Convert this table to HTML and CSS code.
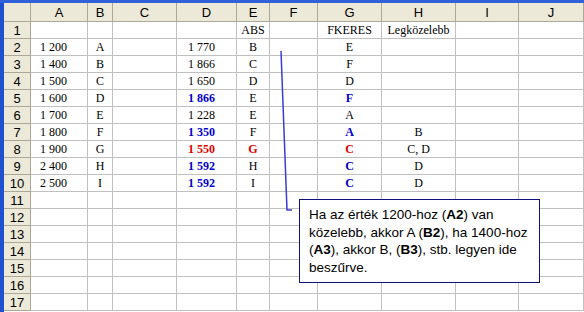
FILE: index.html
```html
<!DOCTYPE html>
<html>
<head>
<meta charset="utf-8">
<link rel="stylesheet" href="styles.css">
</head>
<body>
<div class="screen">
  <div class="topbar"></div>
  <div class="main">
    <div class="leftbar"></div>
    <div class="sheet">
      <div class="h corner"></div><div class="h">A</div><div class="h">B</div><div class="h">C</div><div class="h">D</div><div class="h">E</div><div class="h">F</div><div class="h">G</div><div class="h">H</div><div class="h">I</div><div class="h">J</div>

      <div class="h r">1</div><div class="c"></div><div class="c"></div><div class="c"></div><div class="c"></div><div class="c m">ABS</div><div class="c"></div><div class="c m">FKERES</div><div class="c m">Legközelebb</div><div class="c"></div><div class="c"></div>

      <div class="h r">2</div><div class="c a">1 200</div><div class="c m">A</div><div class="c"></div><div class="c d">1 770</div><div class="c m">B</div><div class="c"></div><div class="c m">E</div><div class="c"></div><div class="c"></div><div class="c"></div>

      <div class="h r">3</div><div class="c a">1 400</div><div class="c m">B</div><div class="c"></div><div class="c d">1 866</div><div class="c m">C</div><div class="c"></div><div class="c m">F</div><div class="c"></div><div class="c"></div><div class="c"></div>

      <div class="h r">4</div><div class="c a">1 500</div><div class="c m">C</div><div class="c"></div><div class="c d">1 650</div><div class="c m">D</div><div class="c"></div><div class="c m">D</div><div class="c"></div><div class="c"></div><div class="c"></div>

      <div class="h r">5</div><div class="c a">1 600</div><div class="c m">D</div><div class="c"></div><div class="c d blue">1 866</div><div class="c m">E</div><div class="c"></div><div class="c m blue">F</div><div class="c"></div><div class="c"></div><div class="c"></div>

      <div class="h r">6</div><div class="c a">1 700</div><div class="c m">E</div><div class="c"></div><div class="c d">1 228</div><div class="c m">E</div><div class="c"></div><div class="c m">A</div><div class="c"></div><div class="c"></div><div class="c"></div>

      <div class="h r">7</div><div class="c a">1 800</div><div class="c m">F</div><div class="c"></div><div class="c d blue">1 350</div><div class="c m">F</div><div class="c"></div><div class="c m blue">A</div><div class="c m">B</div><div class="c"></div><div class="c"></div>

      <div class="h r">8</div><div class="c a">1 900</div><div class="c m">G</div><div class="c"></div><div class="c d red">1 550</div><div class="c m red">G</div><div class="c"></div><div class="c m red">C</div><div class="c m">C, D</div><div class="c"></div><div class="c"></div>

      <div class="h r">9</div><div class="c a">2 400</div><div class="c m">H</div><div class="c"></div><div class="c d blue">1 592</div><div class="c m">H</div><div class="c"></div><div class="c m blue">C</div><div class="c m">D</div><div class="c"></div><div class="c"></div>

      <div class="h r">10</div><div class="c a">2 500</div><div class="c m">I</div><div class="c"></div><div class="c d blue">1 592</div><div class="c m">I</div><div class="c"></div><div class="c m blue">C</div><div class="c m">D</div><div class="c"></div><div class="c"></div>

      <div class="h r">11</div><div class="c"></div><div class="c"></div><div class="c"></div><div class="c"></div><div class="c"></div><div class="c"></div><div class="c"></div><div class="c"></div><div class="c"></div><div class="c"></div>
      <div class="h r">12</div><div class="c"></div><div class="c"></div><div class="c"></div><div class="c"></div><div class="c"></div><div class="c"></div><div class="c"></div><div class="c"></div><div class="c"></div><div class="c"></div>
      <div class="h r">13</div><div class="c"></div><div class="c"></div><div class="c"></div><div class="c"></div><div class="c"></div><div class="c"></div><div class="c"></div><div class="c"></div><div class="c"></div><div class="c"></div>
      <div class="h r">14</div><div class="c"></div><div class="c"></div><div class="c"></div><div class="c"></div><div class="c"></div><div class="c"></div><div class="c"></div><div class="c"></div><div class="c"></div><div class="c"></div>
      <div class="h r">15</div><div class="c"></div><div class="c"></div><div class="c"></div><div class="c"></div><div class="c"></div><div class="c"></div><div class="c"></div><div class="c"></div><div class="c"></div><div class="c"></div>
      <div class="h r">16</div><div class="c"></div><div class="c"></div><div class="c"></div><div class="c"></div><div class="c"></div><div class="c"></div><div class="c"></div><div class="c"></div><div class="c"></div><div class="c"></div>
      <div class="h r">17</div><div class="c"></div><div class="c"></div><div class="c"></div><div class="c"></div><div class="c"></div><div class="c"></div><div class="c"></div><div class="c"></div><div class="c"></div><div class="c"></div>
    </div>
  </div>

  <svg class="arrow" width="584" height="312" viewBox="0 0 584 312">
    <polyline points="281,51 287,210 292,210" fill="none" stroke="#3c3cd0" stroke-width="1.5"/>
  </svg>

  <div class="comment">Ha az érték 1200-hoz (<b>A2</b>) van közelebb, akkor A (<b>B2</b>), ha 1400-hoz (<b>A3</b>), akkor B, (<b>B3</b>), stb. legyen ide beszűrve.</div>
</div>
</body>
</html>
```

FILE: styles.css
```css
html, body {
  margin: 0;
  padding: 0;
  background: #ffffff;
}

.screen {
  position: relative;
  width: 584px;
  height: 312px;
  overflow: hidden;
  display: flex;
  flex-direction: column;
}

.topbar {
  height: 3px;
  background: #2f62d8;
  flex: none;
}

.main {
  display: flex;
  flex: 1;
  min-height: 0;
}

.leftbar {
  width: 4px;
  background: #1f50d0;
  flex: none;
}

.sheet {
  display: grid;
  grid-template-columns: 27px 57px 25px 64px 60px 33px 48px 64px 74px 63px 65px;
  grid-template-rows: 19px repeat(17, 17px);
  font-family: "Liberation Serif", "Times New Roman", serif;
  font-size: 12px;
  color: #000;
}

.h {
  box-sizing: border-box;
  background: #ece9d8;
  border-right: 1px solid #aca899;
  border-bottom: 1px solid #aca899;
  font-family: "Liberation Sans", Arial, sans-serif;
  font-size: 13px;
  display: flex;
  align-items: center;
  justify-content: center;
  color: #000;
  padding-top: 1px;
}

.c {
  box-sizing: border-box;
  border-right: 1px solid #c0c0c0;
  border-bottom: 1px solid #c0c0c0;
  display: flex;
  align-items: flex-end;
  padding-bottom: 1px;
  line-height: 14px;
  white-space: nowrap;
  overflow: visible;
}

.a {
  padding-left: 9px;
}

.m {
  justify-content: center;
}

.d {
  justify-content: flex-end;
  padding-right: 21px;
}

.blue {
  color: #0000cc;
  font-weight: bold;
}

.red {
  color: #e00000;
  font-weight: bold;
}

.arrow {
  position: absolute;
  left: 0;
  top: 0;
  pointer-events: none;
}

.comment {
  position: absolute;
  left: 299px;
  top: 199px;
  width: 241px;
  height: 84px;
  box-sizing: border-box;
  background: #ffffff;
  border: 1px solid #10107a;
  padding: 6px 10px 0 9px;
  font-family: "Liberation Sans", Arial, sans-serif;
  font-size: 13.5px;
  line-height: 17.7px;
  color: #000;
}

.comment b {
  font-weight: bold;
}
```
